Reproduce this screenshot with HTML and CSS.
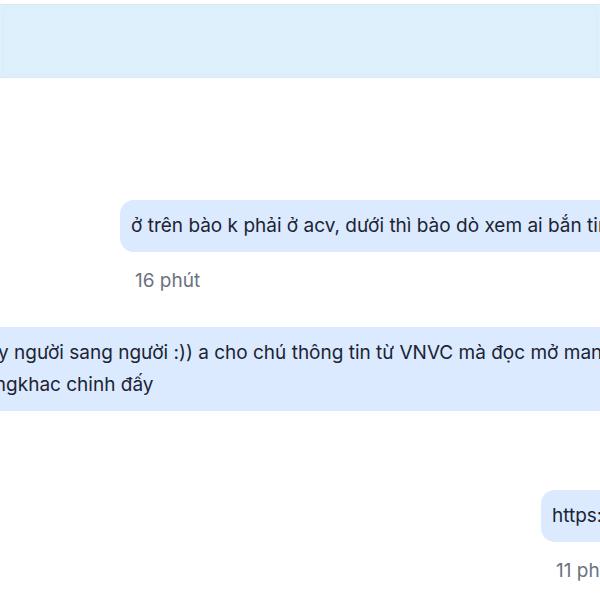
FILE: index.html
```html
<!DOCTYPE html>
<html lang="vi">
<head>
<meta charset="utf-8">
<link rel="stylesheet" href="styles.css">
</head>
<body>
<div class="chat">
  <div class="composer"><div class="composer-inner"></div></div>
  <div class="msg mine first">
    <div class="bubble">ở trên bào k phải ở acv, dưới thì bào dò xem ai bắn tin nhắn</div>
    <div class="time">16 phút</div>
  </div>
  <div class="msg theirs">
    <div class="bubble wide">vậy người sang người :)) a cho chú thông tin từ VNVC mà đọc mở mang<br>thôngkhac chinh đấy</div>
  </div>
  <div class="msg mine last">
    <div class="bubble">https://vnvc.vn</div>
    <div class="time">11 phút</div>
  </div>
</div>
</body>
</html>
```
FILE: styles.css
```css
html, body {
  margin: 0;
  padding: 0;
  background: #ffffff;
  overflow: hidden;
  width: 600px;
  height: 600px;
}
.chat {
  display: flex;
  flex-direction: column;
  font-family: Inter, "Noto Sans", sans-serif;
  font-size: 19px;
  color: #1c2433;
  padding-top: 4px;
}
.composer {
  height: 68px;
  margin: 0 -2px;
  background: #dff0fd;
  border: 1px solid #d6e8f6;
  display: flex;
  padding: 2px 4px;
}
.composer-inner {
  flex: 1;
  border: 1px solid #d9ebf8;
  border-radius: 2px;
}
.msg {
  display: flex;
  flex-direction: column;
  align-items: flex-start;
}
.bubble {
  background: #dbeafe;
  border-radius: 14px;
  padding: 10px 11px;
  line-height: 32px;
  white-space: nowrap;
}
.time {
  color: #6b7280;
  font-size: 19px;
  line-height: 24px;
  padding-left: 15px;
  margin-top: 17px;
  white-space: nowrap;
}
.mine.first {
  margin-top: 122px;
  padding-left: 120px;
}
.theirs {
  margin-top: 34px;
  margin-left: -45px;
}
.bubble.wide {
  border-radius: 0 14px 14px 0;
  text-indent: 11px;
}
.mine.last {
  margin-top: 79px;
  padding-left: 541px;
}
```
